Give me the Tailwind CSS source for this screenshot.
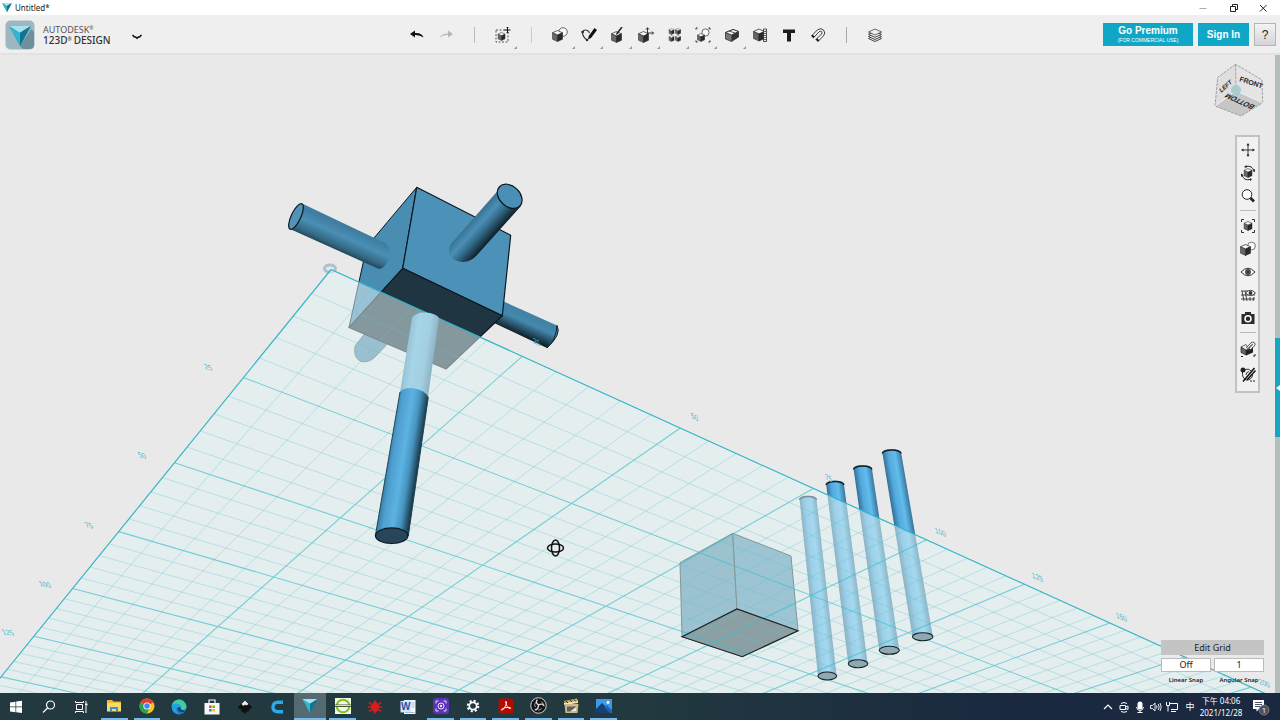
<!DOCTYPE html>
<html lang="en">
<head>
  <meta charset="UTF-8">
  <meta name="viewport" content="width=device-width, initial-scale=1.0">
  <title>Untitled* - Autodesk 123D Design</title>
  <script src="https://cdn.jsdelivr.net/npm/@tailwindcss/browser@4"></script>
</head>
<body class="h-screen flex flex-col overflow-hidden bg-[#e9e9e9] font-['Noto_Sans','Noto_Sans_CJK_TC',sans-serif] text-[#222]">

  <!-- Shared icon shapes -->
  <svg class="hidden">
    <symbol id="cube" viewBox="0 0 12 13">
      <path d="M6 .5 11.5 3 6 5.500 .5 3Z" fill="#f4f4f4" stroke="#333" stroke-width=".8"/>
      <path d="M.5 3 6 5.500V12.500L.5 10Z" fill="#666" stroke="#333" stroke-width=".6"/>
      <path d="M11.500 3 6 5.500V12.500L11.500 10Z" fill="#2a2a2a" stroke="#222" stroke-width=".6"/>
    </symbol>
    <symbol id="arrow-mark" viewBox="0 0 26 24">
      <path d="M0 0 13 5 26 0 13 24Z" fill="#1792ae"/>
      <path d="M0 0 13 8V24Z" fill="#35b4d0"/>
      <path d="M0 0 26 0 13 8Z" fill="#a9e2ee"/>
      <path d="M13 8 26 0 13 24Z" fill="#0f7690"/>
    </symbol>
  </svg>

  <!-- Title bar -->
  <header class="h-[15px] shrink-0 bg-white flex items-center pl-[2px] pr-3">
    <svg class="w-[10px] h-[9px]"><use href="#arrow-mark"/></svg>
    <h1 class="ml-[3px] text-[8px] leading-[15px]">Untitled*</h1>
    <div class="ml-auto flex items-center gap-5">
      <button aria-label="Minimize" class="w-[10px] h-[10px]"><svg viewBox="0 0 10 10" fill="none" stroke="#aaa"><path d="M1.500 5.500H8.500"/></svg></button>
      <button aria-label="Restore" class="w-[10px] h-[10px]"><svg viewBox="0 0 10 10" fill="none" stroke="#222"><path d="M2.500 3.500H7.500V8.500H2.500ZM4.500 3.500V1.500H9.500V6.500H7.500"/></svg></button>
      <button aria-label="Close" class="w-[10px] h-[10px]"><svg viewBox="0 0 10 10" fill="none" stroke="#222"><path d="M2 2 8.500 8.500M8.500 2 2 8.500"/></svg></button>
    </div>
  </header>

  <!-- Toolbar -->
  <nav class="h-10 shrink-0 bg-[#efefef] border-b-2 border-[#e2e2e2] flex items-center pt-px pr-1">
    <div class="w-[403px] shrink-0 flex items-center pl-[5px]">
      <svg class="w-[30px] h-[30px]" viewBox="0 0 30 30">
        <rect x=".5" y=".5" width="29" height="29" rx="5" fill="#9db7c0"/>
        <path d="M26 9 29 12V25Q29 29 25 29H18L15 26Z" fill="#6e8f9c"/>
        <use href="#arrow-mark" x="4" y="6" width="22" height="20"/>
      </svg>
      <div class="ml-2 w-[84px]">
        <div class="flex text-[9px] leading-[11px] text-[#555]">AUTODESK<span class="text-[5px] leading-[8px]">®</span></div>
        <div class="flex text-[10px] leading-[11px] font-medium text-[#333]">123D<span class="text-[5px] leading-[8px] mr-[2px]">®</span>DESIGN</div>
      </div>
      <button aria-label="Application menu" class="ml-1 pt-1"><svg class="w-3 h-2" viewBox="0 0 12 8"><path d="M1.500 2 3.500 4H4.500L6 5.200 7.500 4H8.500L10.500 2" fill="none" stroke="#111" stroke-width="1.600"/></svg></button>
    </div>

    <div class="w-[486px] shrink-0 grid grid-cols-[repeat(17,minmax(0,1fr))] h-full items-center justify-items-center">
      <button aria-label="Undo"><svg class="w-4 h-4" viewBox="0 0 16 16"><path d="M1 7 6 3.500V6Q13 5.500 14.500 10.500Q11 7.800 6 8V10.500Z" fill="#111"/></svg></button>
      <button aria-label="Redo"><svg class="w-4 h-4" viewBox="0 0 16 16"><path d="M15 7 10 3.500V6.500Q4 6.500 1.500 10.500Q5 8 10 7.800V10.500Z" fill="#b5b5b5"/></svg></button>
      <span class="w-px h-4 bg-[#bbb]"></span>
      <button aria-label="Transform" class="relative w-full h-full flex items-center justify-center">
        <svg class="w-4 h-4" viewBox="0 0 16 16"><rect x="1" y="3" width="12" height="12" fill="none" stroke="#333" stroke-dasharray="2 1.500" stroke-width=".8"/><use href="#cube" x="2.500" y="5" width="8" height="9"/><path d="M12.500 0V6M9.500 3H15.500" stroke="#111"/><path d="M11.500 1 12.500 0 13.500 1M11.500 5 12.500 6 13.500 5" fill="none" stroke="#111" stroke-width=".7"/></svg>
        <svg class="absolute right-0 bottom-1 w-[3px] h-[3px]" viewBox="0 0 3 3"><path d="M3 0V3H0Z" fill="#999"/></svg>
      </button>
      <span class="w-px h-4 bg-[#ccc]"></span>
      <button aria-label="Primitives" class="relative w-full h-full flex items-center justify-center">
        <svg class="w-4 h-4" viewBox="0 0 16 16"><circle cx="11" cy="5" r="4.300" fill="#f8f8f8" stroke="#444" stroke-width=".8"/><use href="#cube" x="0" y="3" width="11" height="12"/></svg>
        <svg class="absolute right-0 bottom-1 w-[3px] h-[3px]" viewBox="0 0 3 3"><path d="M3 0V3H0Z" fill="#999"/></svg>
      </button>
      <button aria-label="Sketch" class="relative w-full h-full flex items-center justify-center">
        <svg class="w-4 h-4" viewBox="0 0 16 16"><path d="M6 13Q1.500 10 1.500 5Q3 2 6.500 3.500Q8 4.500 8.500 6" fill="none" stroke="#333" stroke-width="1.100"/><circle cx="1.600" cy="5" r="1.300" fill="#222"/><circle cx="6" cy="13" r="1.200" fill="#222"/><path d="M13.500 1 16 3 10 11 7 12.500 7.700 9Z" fill="#111"/></svg>
        <svg class="absolute right-0 bottom-1 w-[3px] h-[3px]" viewBox="0 0 3 3"><path d="M3 0V3H0Z" fill="#999"/></svg>
      </button>
      <button aria-label="Construct" class="relative w-full h-full flex items-center justify-center">
        <svg class="w-4 h-4" viewBox="0 0 16 16"><use href="#cube" x="2" y="4" width="11" height="12"/><path d="M13 0 8 6.500" stroke="#222" stroke-width="1.500"/><path d="M7 8 7.500 5.500 9.500 6.500Z" fill="#222"/></svg>
        <svg class="absolute right-0 bottom-1 w-[3px] h-[3px]" viewBox="0 0 3 3"><path d="M3 0V3H0Z" fill="#999"/></svg>
      </button>
      <button aria-label="Modify" class="relative w-full h-full flex items-center justify-center">
        <svg class="w-4 h-4" viewBox="0 0 16 16"><use href="#cube" x="0" y="4" width="11" height="12"/><path d="M9.500 8V1M9.500 6H15.500M8 2.500 9.500 .7 11 2.500M14 4.500 15.500 6 14 7.500" fill="none" stroke="#222" stroke-width=".9"/></svg>
        <svg class="absolute right-0 bottom-1 w-[3px] h-[3px]" viewBox="0 0 3 3"><path d="M3 0V3H0Z" fill="#999"/></svg>
      </button>
      <button aria-label="Pattern" class="relative w-full h-full flex items-center justify-center">
        <svg class="w-4 h-4" viewBox="0 0 16 16"><use href="#cube" x="1.500" y="1" width="6" height="7"/><use href="#cube" x="8" y="1" width="6" height="7"/><use href="#cube" x="1.500" y="8" width="6" height="7"/><use href="#cube" x="8" y="8" width="6" height="7"/></svg>
        <svg class="absolute right-0 bottom-1 w-[3px] h-[3px]" viewBox="0 0 3 3"><path d="M3 0V3H0Z" fill="#999"/></svg>
      </button>
      <button aria-label="Grouping" class="relative w-full h-full flex items-center justify-center">
        <svg class="w-4 h-4" viewBox="0 0 16 16"><circle cx="10.500" cy="5.500" r="3.600" fill="#f8f8f8" stroke="#444" stroke-width=".8"/><use href="#cube" x="2" y="6" width="8" height="9"/><path d="M1 2.500V1H2.500M13.500 1H15V2.500M15 13.500V15H13.500M2.500 15H1V13.500" fill="none" stroke="#222"/></svg>
        <svg class="absolute right-0 bottom-1 w-[3px] h-[3px]" viewBox="0 0 3 3"><path d="M3 0V3H0Z" fill="#999"/></svg>
      </button>
      <button aria-label="Combine" class="relative w-full h-full flex items-center justify-center">
        <svg class="w-4 h-4" viewBox="0 0 16 16"><path d="M1.500 5.500 9 2.500 14.500 4.500V10L7.500 14.500 1.500 12Z" fill="#777" stroke="#222" stroke-width=".7"/><path d="M1.500 5.500 9 2.500 14.500 4.500 7.500 8Z" fill="#f4f4f4" stroke="#222" stroke-width=".8"/><path d="M7.500 8 14.500 4.500V10L7.500 14.500Z" fill="#333"/><path d="M5 4 11 6" stroke="#333" stroke-width=".8"/></svg>
        <svg class="absolute right-0 bottom-1 w-[3px] h-[3px]" viewBox="0 0 3 3"><path d="M3 0V3H0Z" fill="#999"/></svg>
      </button>
      <button aria-label="Measure"><svg class="w-4 h-4" viewBox="0 0 16 16"><use href="#cube" x="1" y="1" width="12" height="14"/><path d="M11.500 2H14.500V14.500H11.500Z" fill="#eee" stroke="#222" stroke-width=".8"/><path d="M12 4.500H14M12 6.500H14M12 8.500H14M12 10.500H14M12 12.500H14" stroke="#222" stroke-width=".7"/></svg></button>
      <button aria-label="Text"><svg class="w-4 h-4" viewBox="0 0 16 16"><path d="M2 2.500H14V6H10V14.500H6V6H2Z" fill="#1c1c1c"/></svg></button>
      <button aria-label="Snap"><svg class="w-4 h-4" viewBox="0 0 16 16"><path d="M1.500 9 7.500 2.800Q11 .5 13.500 3Q16 6 13.500 8.800L8 14.500 6 12.500 11.500 7Q12.500 5.500 11.500 4.500Q10.500 3.700 9 4.800L3.500 10.800Z" fill="#f5f5f5" stroke="#222" stroke-width=".9"/><path d="M1.500 9 2.700 7.800 4.700 9.600 3.500 10.800ZM6 12.500 7.200 11.300 9.200 13.200 8 14.500Z" fill="#111"/></svg></button>
      <span class="w-px h-4 bg-[#aaa]"></span>
      <button aria-label="Material"><svg class="w-4 h-4" viewBox="0 0 16 16" fill="#eee" stroke="#444" stroke-width="1"><path d="M1.500 11.500 8 14.500 14.500 11.500 8 8.500Z"/><path d="M1.500 9.500 8 12.500 14.500 9.500 8 6.500Z"/><path d="M1.500 7.300 8 10.300 14.500 7.300 8 4.500Z"/><path d="M1.500 5 8 8 14.500 5 8 2Z" stroke-width=".8"/></svg></button>
    </div>

    <div class="ml-auto flex gap-[5px] font-['Liberation_Sans',sans-serif]">
      <button class="w-[90px] h-[23px] bg-[#10a7c6] text-white">
        <span class="block text-[10px] leading-[12px] font-bold">Go Premium</span>
        <span class="block text-[5px] leading-[7px]">(FOR COMMERCIAL USE)</span>
      </button>
      <button class="w-[51px] h-[23px] bg-[#10a7c6] text-white text-[10px] font-bold">Sign In</button>
      <button class="w-[22px] h-[23px] border border-[#b5b5b5] bg-linear-to-b from-[#f4f4f4] to-[#d4d4d8] text-xs">?</button>
    </div>
  </nav>

  <!-- Viewport -->
  <main class="relative flex-1 min-h-0 overflow-hidden">
    <svg class="w-full h-full block" viewBox="0 55 1280 638" preserveAspectRatio="xMidYMid slice">
      <defs>
        <linearGradient id="gLeft" gradientUnits="userSpaceOnUse" x1="345" y1="226" x2="333" y2="253"><stop offset="0" stop-color="#3f7c9f"/><stop offset=".35" stop-color="#4a8fb6"/><stop offset=".7" stop-color="#346883"/><stop offset="1" stop-color="#142a38"/></linearGradient>
        <linearGradient id="gTop" gradientUnits="userSpaceOnUse" x1="472" y1="218" x2="493" y2="237"><stop offset="0" stop-color="#356e8f"/><stop offset=".35" stop-color="#4a8fb6"/><stop offset=".6" stop-color="#356c8a"/><stop offset="1" stop-color="#0e2029"/></linearGradient>
        <linearGradient id="gRight" gradientUnits="userSpaceOnUse" x1="535" y1="314" x2="525" y2="337"><stop offset="0" stop-color="#3f7fa3"/><stop offset=".45" stop-color="#4589ae"/><stop offset="1" stop-color="#0e212c"/></linearGradient>
        <linearGradient id="gMain" gradientUnits="userSpaceOnUse" x1="375" y1="533" x2="408" y2="538"><stop offset="0" stop-color="#33769f"/><stop offset=".2" stop-color="#4e9fd0"/><stop offset=".5" stop-color="#5cb3e2"/><stop offset=".72" stop-color="#4794c0"/><stop offset="1" stop-color="#14303f"/></linearGradient>
        <linearGradient id="gFaded" gradientUnits="userSpaceOnUse" x1="375" y1="533" x2="408" y2="538"><stop offset="0" stop-color="#8fbace"/><stop offset=".35" stop-color="#a6d5e8"/><stop offset=".7" stop-color="#a3cfe2"/><stop offset="1" stop-color="#89aebe"/></linearGradient>
        <linearGradient id="gRod"><stop offset="0" stop-color="#326f96"/><stop offset=".3" stop-color="#53aadd"/><stop offset=".65" stop-color="#62bcec"/><stop offset="1" stop-color="#37779e"/></linearGradient>
      </defs>

      <!-- origin marker -->
      <ellipse cx="330" cy="268.500" rx="5.500" ry="3.500" fill="none" stroke="#aebfcd" stroke-width="3"/>

      <!-- cube with crossing cylinders -->
      <g stroke-linejoin="round">
        <path d="M496 298 557 325.500Q560 333 547 348L492 322Z" fill="url(#gRight)"/>
        <path d="M557 325.500Q562 334 547 348Q556 340 557 325.500Z" fill="#4787a9" stroke="#10222c"/>
        <path d="M364.500 334 355 346Q353 358 361 361.500Q369 363 375 357L393 338Z" fill="#4b88a8" stroke="#274b5e" stroke-width=".8"/>
        <path d="M416.700 187.300 402.700 268.300 349 327.500 366.700 246.700Z" fill="#4a8db2" stroke="#0c1820"/>
        <path d="M416.700 187.300 510.700 235.300 502.300 315.700 402.700 268.300Z" fill="#4b91b8" stroke="#0c1820" stroke-width="1.200"/>
        <path d="M402.700 268.300 502.300 315.700 446 369 349 327.500Z" fill="#1f3541" stroke="#0c1820" stroke-width="1.200"/>
        <path d="M302 203.500 386 243.500Q392 249 387 262Q384 269 379 269L290 229Z" fill="url(#gLeft)"/>
        <ellipse cx="296" cy="216.500" rx="14" ry="4.800" transform="rotate(-65 296 216.500)" fill="#5293b6" stroke="#0c1820" stroke-width="1.200"/>
        <path d="M498.500 190 450 245Q446 256 456 260.500Q468 265 477 255L521 206Z" fill="url(#gTop)"/>
        <ellipse cx="509.700" cy="196.300" rx="14" ry="10.200" transform="rotate(43 509.700 196.300)" fill="#4a8fb6" stroke="#0c1820" stroke-width="1.200"/>
      </g>

      <!-- cube and rods under the grid -->
      <g stroke="#1e2f38" stroke-width="1" stroke-linejoin="round">
        <path d="M732.700 533.300 680 562.700 682 636.700 737 609Z" fill="#508ba8"/>
        <path d="M732.700 533.300 791 556 798 630.700 737 609Z" fill="#5390af"/>
        <path d="M737 609 798 630.700 742.300 656.700 682 636.700Z" fill="#2e434c"/>
      </g>
      <g id="rods"></g>

      <!-- work plane -->
      <path id="plane" fill="#e2f3f4" fill-opacity=".52"/>
      <path id="minor" fill="none" stroke="#62c3cc" stroke-width=".8" stroke-opacity=".45"/>
      <path id="major" fill="none" stroke="#3dbccb" stroke-width="1.100" stroke-opacity=".68"/>
      <path id="edge" fill="none" stroke="#35b5c8" stroke-width="1.200"/>

      <g id="rodEnds" stroke="#14222a" stroke-width="1.100" fill="#8fa9b2"></g>
      <path d="M682 636.700 737 609 798 630.700 742.300 656.700Z" fill="none" stroke="#1a2529" stroke-width="1.200"/>

      <!-- cylinder coming through the plane -->
      <path d="M412 318Q416 312 425 312.500Q436 313 439 318L428 397 400 392Z" fill="url(#gFaded)"/>
      <path d="M400 392Q402 388 412 388Q425 390 428.300 397L408.300 536H375.300Z" fill="url(#gMain)"/>
      <path d="M428.300 397 408.300 536M400 392 375.300 536" stroke="#1a394a" stroke-width=".9"/>
      <ellipse cx="391.700" cy="535.700" rx="16.200" ry="7.800" fill="#28465a" stroke="#0c1820" stroke-width="1.200"/>

      <g id="gridLabels" fill="#48b9c9" font-size="7" text-anchor="middle" font-family="Liberation Sans, sans-serif"></g>

      <!-- orbit cursor -->
      <g fill="none" stroke="#111" stroke-width="1.500"><ellipse cx="555.500" cy="548" rx="8" ry="4"/><ellipse cx="555.500" cy="548" rx="4" ry="8"/></g>
    </svg>

    <!-- View cube -->
    <svg class="absolute top-2 right-4 w-[50px] h-[54px]" viewBox="0 0 50 54" font-family="Liberation Sans, sans-serif" font-size="7" font-weight="bold" fill="#222">
      <path d="M21.700 1.300 3.700 14.300 1 43 22 28Z" fill="#dedede"/>
      <path d="M21.700 1.300 48 17 48.700 39.700 22 28Z" fill="#e4e4e4"/>
      <path d="M22 28 48.700 39.700 27 53 1 43Z" fill="#c6c6c6"/>
      <path d="M21.700 1.300 3.700 14.300 1 43 27 53 48.700 39.700 48 17ZM21.700 1.300 22 28" fill="none" stroke="#8f8f8f" stroke-width=".8" stroke-dasharray="3 1"/>
      <path d="M1 43 22 28 48.700 39.700" fill="none" stroke="#f2f2f2"/>
      <text transform="translate(25 18) rotate(18)">FRONT</text>
      <text transform="translate(7 30) rotate(-42) skewX(-15)" font-size="6">LEFT</text>
      <text transform="translate(26 38) rotate(204) skewX(-25)" text-anchor="middle" y="2">BOTTOM</text>
      <circle cx="22" cy="27" r="5" fill="#9fc9cc" fill-opacity=".85"/>
    </svg>

    <!-- Navigation bar -->
    <div class="absolute top-20 right-5 w-[25px] border-2 border-[#c2c2c2] bg-[#f1f1f1] pt-px pb-[3px] flex flex-col items-center">
      <button aria-label="Pan" class="h-[23px]"><svg class="w-4 h-4" viewBox="0 0 16 16" fill="#222"><path d="M8 2V14M2 8H14" stroke="#222" stroke-width=".9"/><path d="M8 1 9.500 3.500H6.500ZM8 15 9.500 12.500H6.500ZM1 8 3.500 6.500V9.500ZM15 8 12.500 6.500V9.500Z"/></svg></button>
      <button aria-label="Orbit" class="h-[23px]"><svg class="w-4 h-4" viewBox="0 0 16 16"><use href="#cube" x="3.500" y="3" width="9" height="10"/><path d="M6 1.500Q12 0 14 6M10 14.500Q4 16 2 10" fill="none" stroke="#222"/><path d="M6.500 0V3L4 2ZM15 4V7L12.500 6ZM1 12V8.500L3.500 10ZM10 13V16L12 14.500Z" fill="#222"/></svg></button>
      <button aria-label="Zoom" class="h-[23px]"><svg class="w-4 h-4" viewBox="0 0 16 16"><circle cx="7" cy="6.500" r="4.800" fill="#fff" stroke="#222"/><path d="M10.500 10 14 13.500" stroke="#222" stroke-width="2.600"/></svg></button>
      <hr class="w-4 my-[3px] border-[#bbb]">
      <button aria-label="Fit" class="h-[23px]"><svg class="w-4 h-4" viewBox="0 0 16 16"><use href="#cube" x="3.500" y="3" width="9" height="10"/><path d="M1.500 4V1.500H4M12 1.500H14.500V4M14.500 12V14.500H12M4 14.500H1.500V12" fill="none" stroke="#333"/></svg></button>
      <button aria-label="Shading" class="h-[23px]"><svg class="w-4 h-4" viewBox="0 0 16 16"><circle cx="11.500" cy="5" r="3.900" fill="#f8f8f8" stroke="#555" stroke-width=".8"/><use href="#cube" x="0" y="3" width="11" height="12"/></svg></button>
      <button aria-label="Visibility" class="h-[23px]"><svg class="w-4 h-4" viewBox="0 0 16 16"><path d="M1 8Q8 .5 15 8Q8 15.500 1 8Z" fill="#fafafa" stroke="#333"/><circle cx="8" cy="8" r="2.900" fill="#444"/></svg></button>
      <button aria-label="Grid visibility" class="h-[23px]"><svg class="w-4 h-4" viewBox="0 0 16 16"><path d="M1 4H8M1 8H15M1 12H15M2 4 4 14M5 4 7 14M10 10V14M14 10 13 14" fill="none" stroke="#333" stroke-width=".9"/><path d="M5.500 6Q10.500 .5 15.500 6Q10.500 11 5.500 6Z" fill="#fafafa" stroke="#333" stroke-width=".9"/><circle cx="10.500" cy="6" r="1.900" fill="#333"/></svg></button>
      <button aria-label="Screenshot" class="h-[23px]"><svg class="w-4 h-4" viewBox="0 0 16 16"><path d="M1.500 4H5V2H11V4H14.500V14H1.500Z" fill="#2b2b2b"/><circle cx="8" cy="8.800" r="3" fill="none" stroke="#fff" stroke-width="1.500"/></svg></button>
      <hr class="w-4 my-[3px] border-[#bbb]">
      <button aria-label="Snap while moving" class="h-[26px]"><svg class="w-4 h-4" viewBox="0 0 16 16"><path d="M1 6 6 9V14L1 11.500Z" fill="#666" stroke="#222" stroke-width=".7"/><path d="M6 9 13 6.500V11.500L6 14.500Z" fill="#222"/><path d="M1 6 6 3.500 8 7 13 6.500 6 9Z" fill="#f4f4f4" stroke="#222" stroke-width=".7"/><path d="M6.500 6.500 11 1.800Q13 .3 14.500 1.800Q16 3.300 14.300 5L10.500 8.800 9 7.300 12.500 3.800Q12.500 3 11.700 3.500L8 7.500Z" fill="#f4f4f4" stroke="#333" stroke-width=".8"/><path d="M1 15.500H3M13 15H15V13" fill="none" stroke="#222"/></svg></button>
      <button aria-label="Toggle sketches" class="h-[26px]"><svg class="w-4 h-4" viewBox="0 0 16 16"><path d="M2.500 5Q2 11 6 13Q12 13 12.500 8M4 3Q9 1 11 4M6 8Q6 5 9 4.500" fill="none" stroke="#333"/><circle cx="3" cy="3" r="2.500" fill="#222"/><path d="M14.500 1 3 14.500M15.500 3.500 7 13" stroke="#111" stroke-width="1.500"/><path d="M10 14H15" stroke="#222" stroke-dasharray="2 1"/></svg></button>
    </div>

    <!-- Grid and snap settings -->
    <form class="absolute right-4 bottom-2 w-[103px] grid grid-cols-2 gap-x-[3px] gap-y-[3px]">
      <button type="button" class="col-span-2 h-[15px] bg-[#c4c4c4] text-[9px] leading-[15px]">Edit Grid</button>
      <select id="linearSnap" class="appearance-none h-[14px] border border-[#bbb] bg-white text-[9px] leading-[12px] text-center"><option>Off</option></select>
      <select id="angularSnap" class="appearance-none h-[14px] border border-[#bbb] bg-white text-[9px] leading-[12px] text-center"><option>1</option></select>
      <label for="linearSnap" class="text-[6px] leading-[10px] font-semibold text-center whitespace-nowrap">Linear Snap</label>
      <label for="angularSnap" class="text-[6px] leading-[10px] font-semibold text-center whitespace-nowrap">Angular Snap</label>
    </form>

    <!-- Collapsed side panel -->
    <div class="absolute inset-y-0 right-0 w-[5px] bg-[#b4bebc] flex flex-col">
      <button aria-label="Open parts panel" class="mt-[283px] h-[99px] bg-[#18a5c3] flex items-center"><svg class="w-[5px] h-2" viewBox="0 0 5 8"><path d="M5 1V7L1 4Z" fill="#fff"/></svg></button>
    </div>
  </main>

  <!-- Windows taskbar -->
  <footer class="h-[27px] shrink-0 flex items-center bg-linear-to-r from-[#22393f] from-50% to-[#1a2840] to-80% text-white">
    <div class="w-[620px] h-full shrink-0 grid grid-cols-[repeat(19,minmax(0,1fr))]">
      <button aria-label="Start" class="flex items-center justify-center"><svg class="w-4 h-4" viewBox="0 0 16 16" fill="#fff"><path d="M2 3.500 7.500 2.700V7.500H2ZM8.200 2.600 14 1.800V7.500H8.200ZM2 8.200H7.500V13.200L2 12.400ZM8.200 8.200H14V14L8.200 13.300Z"/></svg></button>
      <button aria-label="Search" class="flex items-center justify-center"><svg class="w-4 h-4" viewBox="0 0 16 16" fill="none" stroke="#fff" stroke-width="1.200"><circle cx="9.500" cy="6" r="4"/><path d="M6.600 9 2 13.500"/></svg></button>
      <button aria-label="Task view" class="flex items-center justify-center"><svg class="w-4 h-4" viewBox="0 0 16 16" fill="none" stroke="#fff"><path d="M2.500 5.500H8.500V10.500H2.500ZM1.500 2V3.500H9.500V2M1.500 14V12.500H9.500V14M12 2V4.500M12 7V14"/><path d="M11 5.500H13.500" stroke-width="2"/></svg></button>
      <button aria-label="File Explorer" class="flex items-center justify-center border-b-2 border-[#76b9ed] mx-[3px]"><svg class="w-4 h-4" viewBox="0 0 16 16"><path d="M1 2H6L7.500 3.500H15V13H1Z" fill="#eeb83b"/><path d="M1 5H15V13.500H1Z" fill="#fbd968"/><path d="M4 14V9H12V14H10V11H6V14Z" fill="#3f8fd0"/></svg></button>
      <button aria-label="Chrome" class="flex items-center justify-center border-b-2 border-[#76b9ed] mx-[3px]"><svg class="w-4 h-4" viewBox="0 0 16 16"><circle cx="8" cy="8" r="7.500" fill="#fbc116"/><path d="M8 8 1.500 4.200A7.500 7.500 0 0 1 14.500 4.200Z" fill="#e33b2e"/><path d="M8 8 1.500 4.200A7.500 7.500 0 0 0 8 15.500L11 9Z" fill="#2ca14c"/><circle cx="8" cy="8" r="3.600" fill="#fff"/><circle cx="8" cy="8" r="2.800" fill="#4285f4"/></svg></button>
      <button aria-label="Edge" class="flex items-center justify-center"><svg class="w-4 h-4" viewBox="0 0 16 16"><circle cx="8" cy="8" r="7.500" fill="#1678c8"/><path d="M.6 7A7.500 7.500 0 0 1 15.500 7.500Q15.500 11 11.500 11Q9.500 10.500 10 8.500Q9.500 5 5.500 5Q2 5 .6 7Z" fill="#3ecf9d"/><path d="M.6 7Q4 3 8 5.500Q10 7 9.500 9.500Q6.500 6.500 5.500 10Q5.500 13.500 9 15.400Q1 15 .6 7Z" fill="#1da3e0"/><path d="M9.500 9Q9.500 11.500 14 11.500L12.500 13Q7 13.500 6.500 9.500Q7.500 7.500 9.500 9Z" fill="#15416f"/></svg></button>
      <button aria-label="Store" class="flex items-center justify-center"><svg class="w-4 h-4" viewBox="0 0 16 16"><path d="M5 4V1H11V4" fill="none" stroke="#fff" stroke-width="1.200"/><path d="M.5 4H15.500V15.500H.5Z" fill="#f7f7f7"/><path d="M5 6.500H7.600V9H5Z" fill="#e84f2c"/><path d="M8.400 6.500H11V9H8.400Z" fill="#7fba00"/><path d="M5 10H7.600V12.500H5Z" fill="#1b8fe0"/><path d="M8.400 10H11V12.500H8.400Z" fill="#fdb900"/></svg></button>
      <button aria-label="Inkscape" class="flex items-center justify-center"><svg class="w-4 h-4" viewBox="0 0 16 16"><path d="M8 1 15 8Q15 9.500 11.500 10L13 11.500 9.500 13 8 15 6 13 3.500 12 5 10.500Q1 9.500 1 8Z" fill="#101010"/><path d="M8 1.500 11.500 5 9.500 6.500 8 5.500 6.500 7 4.500 5Z" fill="#eee"/></svg></button>
      <button aria-label="Cura" class="flex items-center justify-center"><svg class="w-4 h-4" viewBox="0 0 16 16"><path d="M14 3.300H9Q4 3.300 4 8Q4 12.700 9 12.700H14" fill="none" stroke="#2fa8e8" stroke-width="3.400"/></svg></button>
      <button aria-label="123D Design" class="flex items-center justify-center bg-[#536a70] border-b-2 border-[#76b9ed]"><svg class="w-4 h-[14px]"><use href="#arrow-mark"/></svg></button>
      <button aria-label="Slicer" class="flex items-center justify-center border-b-2 border-[#76b9ed] mx-[3px]"><svg class="w-4 h-4" viewBox="0 0 16 16"><path d="M0 0H16V16H0Z" fill="#f3f8e8"/><circle cx="8" cy="8" r="6.300" fill="none" stroke="#7cc41c" stroke-width="2"/><path d="M0 6.500H16V9H0Z" fill="#4c5a3a"/><path d="M0 7.500H16" stroke="#dfe" stroke-width=".8"/></svg></button>
      <button aria-label="Bug tool" class="flex items-center justify-center"><svg class="w-4 h-4" viewBox="0 0 16 16"><path d="M1 8H15M2 3.500 6 6.500M14 3.500 10 6.500M2 12.500 6 9.500M14 12.500 10 9.500" stroke="#c81d1f" stroke-width="1.600"/><path d="M8 1 10 4 12 7 11 11 8 15 5 11 4 7 6 4Z" fill="#d11f22"/></svg></button>
      <button aria-label="Word" class="flex items-center justify-center"><svg class="w-4 h-4" viewBox="0 0 16 16"><path d="M4 1H15.500V15H4Z" fill="#f6f8fc"/><path d="M.5 2 11 1.500V13L.5 13.500Z" fill="#d5e4f7"/><path d="M11.500 4H14.500M11.500 6H14.500M11.500 8H14.500M5 13.500H14.500" stroke="#8ba9d3" stroke-width=".8"/><text x="1" y="11" font-size="10" font-weight="bold" font-family="Liberation Sans, sans-serif" fill="#1f55a5">W</text></svg></button>
      <button aria-label="Capture" class="flex items-center justify-center border-b-2 border-[#76b9ed] mx-[3px]"><svg class="w-4 h-4" viewBox="0 0 16 16" fill="none"><rect width="16" height="16" rx="3" fill="#5c34b8"/><path d="M3 5.500V3H5.500M10.500 3H13V5.500M13 10.500V13H10.500M5.500 13H3V10.500" stroke="#e8dcff"/><circle cx="8" cy="8" r="3" stroke="#e8dcff"/><circle cx="8" cy="8" r="1.200" fill="#e8dcff"/></svg></button>
      <button aria-label="Settings" class="flex items-center justify-center border-b-2 border-[#76b9ed] mx-[3px]"><svg class="w-4 h-4" viewBox="0 0 16 16" fill="none" stroke="#fff"><circle cx="8" cy="8" r="3.700" stroke-width="1.800"/><circle cx="8" cy="8" r="5.300" stroke-width="2" stroke-dasharray="2.080 2.080"/></svg></button>
      <button aria-label="Acrobat" class="flex items-center justify-center border-b-2 border-[#76b9ed] mx-[3px]"><svg class="w-4 h-4" viewBox="0 0 16 16"><rect x=".5" y=".5" width="15" height="15" rx="2.500" fill="#b30b00"/><path d="M7.500 3.500Q9 3 8.500 5.500Q7.500 9 4.500 12Q3 12.500 3.500 11.300Q6 9 12 9.300Q13.500 10.500 12 10.700Q8.500 9.500 7.500 3.500Z" fill="none" stroke="#fff" stroke-width=".9"/></svg></button>
      <button aria-label="OBS" class="flex items-center justify-center border-b-2 border-[#76b9ed] mx-[3px]"><svg class="w-[17px] h-[17px]" viewBox="0 0 16 16"><circle cx="8" cy="8" r="7.300" fill="#141414" stroke="#ddd" stroke-width=".9"/><path d="M7 2.500Q4.500 5 8 7.500M13.300 8.500Q12 5.500 8 7.500M4.500 12Q8 12 8 7.500" fill="none" stroke="#ddd" stroke-width="1.300"/><path d="M5.500 5Q3.500 7 5 9.500M10.500 4.500Q12.500 5.500 12.700 6.500M7.500 12.500Q10 12.500 11 10.500" fill="none" stroke="#bbb" stroke-width=".8"/></svg></button>
      <button aria-label="Movie Maker" class="flex items-center justify-center border-b-2 border-[#76b9ed] mx-[3px]"><svg class="w-4 h-4" viewBox="0 0 16 16"><path d="M1 5 15 2V5L1 7Z" fill="#efe6c8"/><path d="M1 3 14 .5 15 3 1.500 5Z" fill="#d4a744"/><path d="M1.500 6H15.500L14.500 15H2.500Z" fill="#cdb88c"/><path d="M4 8.500H13V13.500H4Z" fill="#5a625b"/><path d="M3 3 5 5M7 2 9 4M11 1.500 13 3.500" stroke="#333"/><path d="M7 13.500 13 9V13.500Z" fill="#e9e9df"/></svg></button>
      <button aria-label="Photos" class="flex items-center justify-center border-b-2 border-[#76b9ed] mx-[3px]"><svg class="w-4 h-4" viewBox="0 0 16 16"><path d="M0 1H16V15H0Z" fill="#3b9be6"/><path d="M0 11 6 5 16 15H0Z" fill="#163f78"/><path d="M8 9 10.500 7 16 12V15H14Z" fill="#1f66b4"/><circle cx="12" cy="4.500" r="1.400" fill="#fff"/></svg></button>
    </div>

    <!-- System tray -->
    <div class="ml-auto flex items-center pr-[10px]">
      <div class="flex items-center">
        <button aria-label="Hidden icons" class="w-4"><svg class="w-3 h-3" viewBox="0 0 12 12"><path d="M2 8 6 4 10 8" fill="none" stroke="#fff" stroke-width="1.200"/></svg></button>
        <button aria-label="Meet now" class="w-4"><svg class="w-3 h-3" viewBox="0 0 12 12" fill="none" stroke="#fff"><path d="M2 4.500H7.500V8.500H2ZM7.500 6 10 5V8.500L7.500 7.500M3 2.500Q6 .5 9 2.500M3 10.500Q6 12 9 10.500"/></svg></button>
        <button aria-label="Microphone" class="w-4"><svg class="w-3 h-3" viewBox="0 0 12 12"><rect x="3.500" y=".5" width="5" height="8" rx="2.500" fill="#fff"/><path d="M2.500 6Q3 9.500 6 9.500Q9 9.500 9.500 6M6 9.500V12M3.500 11.500H8.500" fill="none" stroke="#fff"/></svg></button>
        <button aria-label="Volume" class="w-4"><svg class="w-3 h-3" viewBox="0 0 12 12" fill="none" stroke="#fff" stroke-width=".9"><path d="M.5 4.500H2.500L5 2V10L2.500 7.500H.5ZM6.500 4.500Q7.500 6 6.500 7.500M8.300 3Q10 6 8.300 9M10 2Q12.500 6 10 10"/></svg></button>
        <button aria-label="Network" class="w-4"><svg class="w-3 h-3" viewBox="0 0 12 12" fill="none" stroke="#fff"><path d="M3 2.500H11.500V8.500H5M.5 1V4.500H3.500V1M2 4.500V10.500M5 10.500H10"/></svg></button>
        <button aria-label="Input language" class="w-4 text-[9px] leading-[12px]">中</button>
      </div>
      <time datetime="2021-12-28T16:06" class="w-[46px] text-center text-[8px] leading-[12px] whitespace-nowrap">下午 04:06<br>2021/12/28</time>
      <button aria-label="Notifications" class="ml-[8px]"><svg class="w-[18px] h-[18px]" viewBox="0 0 18 18"><path d="M1 2H12V11H7L4.500 13.500V11H1Z" fill="#fff"/><path d="M3 4.500H10M3 6.500H10M3 8.500H8" stroke="#1a2840" stroke-width=".8"/><circle cx="12" cy="12" r="5" fill="#4a5260" stroke="#8a919c" stroke-width=".7"/><text x="12" y="14.500" font-size="7" fill="#fff" text-anchor="middle">1</text></svg></button>
    </div>
  </footer>

  <script>
    // Work plane in perspective: u runs along the right edge, v along the left one
    function project(u, v) {
      const w = 1 + 0.0209 * u + 0.0268 * v;
      return [(331 + 49.15 * u - 10.97 * v) / w, (269.5 + 24.8 * u + 31.72 * v) / w].map(n => n.toFixed(1)).join(' ');
    }

    const size = 80;
    let minor = '';
    let major = '';
    for (let i = 1; i <= size; i++) {
      const lines = `M${project(i, 0)}L${project(i, size)}M${project(0, i)}L${project(size, i)}`;
      if (i % 5 === 0) major += lines;
      else minor += lines;
    }
    document.getElementById('minor').setAttribute('d', minor);
    document.getElementById('major').setAttribute('d', major);
    document.getElementById('plane').setAttribute('d', `M${project(0, 0)}L${project(size, 0)}L${project(size, size)}L${project(0, size)}Z`);
    document.getElementById('edge').setAttribute('d', `M${project(0, size)}L${project(0, 0)}L${project(size, 0)}`);

    // [top x, top y, bottom x, bottom y, end radius]
    const rods = [
      [808, 499, 827.3, 676, 9.3],
      [835, 484, 858, 663.7, 9.7],
      [862.7, 468.5, 889.3, 650.3, 10],
      [891.7, 452.5, 922.7, 636.7, 10.2]
    ];
    document.getElementById('rods').innerHTML = rods.map(([x1, y1, x2, y2, r]) => {
      const t = r - 0.8;
      const nx = (y2 - y1) / Math.hypot(x2 - x1, y2 - y1);
      const ny = -(x2 - x1) / Math.hypot(x2 - x1, y2 - y1);
      const id = `rod${x1}`.replace('.', '_');
      return `
        <linearGradient id="${id}" href="#gRod" gradientUnits="userSpaceOnUse" x1="${x1 - t * nx}" y1="${y1 - t * ny}" x2="${x1 + t * nx}" y2="${y1 + t * ny}"/>
        <path d="M${x1 - t} ${y1}A${t} 3.500 0 0 1 ${x1 + t} ${y1}L${x2 + r} ${y2}H${x2 - r}Z" fill="url(#${id})"/>
        <path d="M${x1 - t} ${y1 + 1}A${t} 3.500 0 0 1 ${x1 + t} ${y1 + 1}" fill="none" stroke="#0f1d26" stroke-width="1.500"/>`;
    }).join('');
    document.getElementById('rodEnds').innerHTML = rods.map(([, , x, y, r]) =>
      `<ellipse cx="${x}" cy="${y}" rx="${r}" ry="4"/>`).join('');

    // [text, x, y, angle]
    const labels = [
      ['25', 209, 370, 14], ['50', 143, 458, 12], ['75', 90, 528, 10], ['100', 46, 587, 10], ['125', 9, 635, 8],
      ['25', 537, 345, 25], ['50', 695, 420, 25], ['75', 829, 481, 25], ['100', 941, 535, 22], ['125', 1038, 580, 22], ['150', 1122, 620, 22], ['200', 1265, 686, 20]
    ];
    document.getElementById('gridLabels').innerHTML = labels.map(([text, x, y, angle]) =>
      `<text transform="translate(${x} ${y}) rotate(${angle}) skewX(35)">${text}</text>`).join('');
  </script>

</body>
</html>
